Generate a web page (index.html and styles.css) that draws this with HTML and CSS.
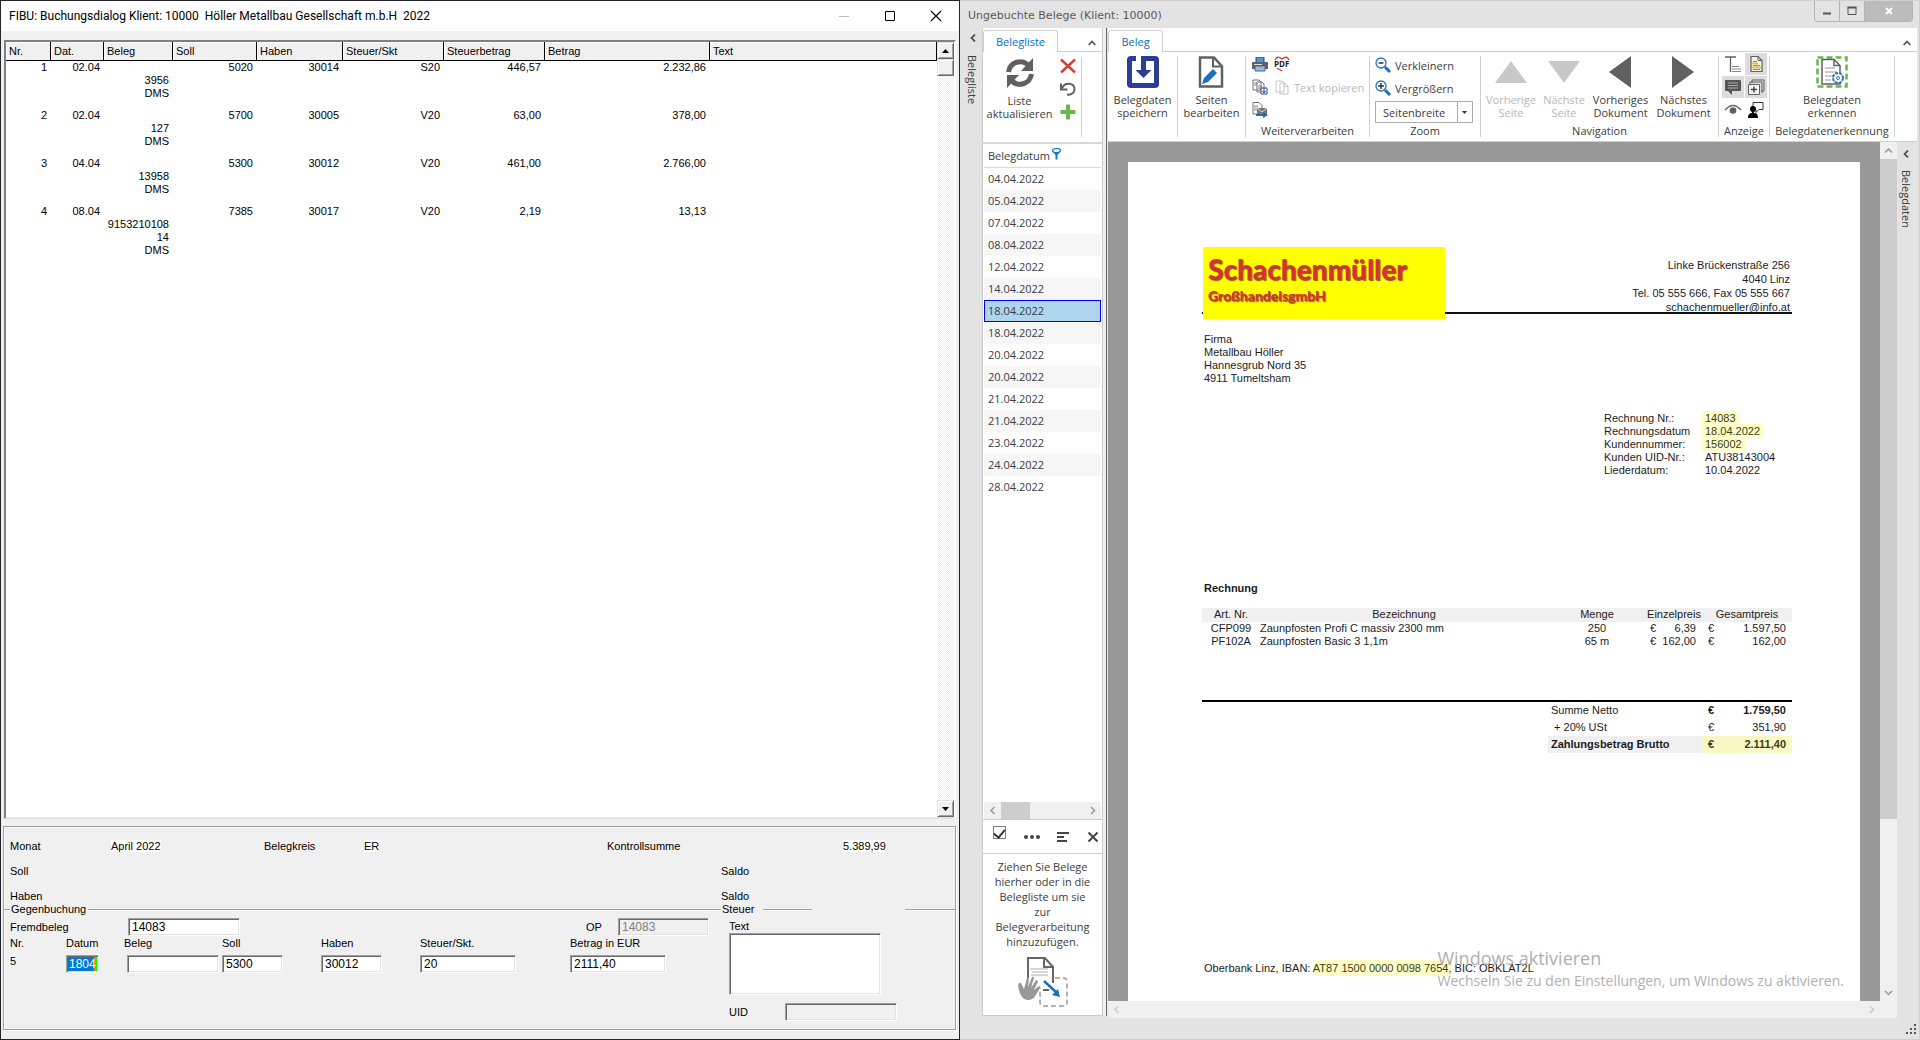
FILE: index.html
```html
<!DOCTYPE html>
<html lang="de">
<head>
<meta charset="utf-8">
<title>FIBU: Buchungsdialog</title>
<link rel="stylesheet" href="styles.css">
</head>
<body>
<div class="desktop">

<section class="fibu">
  <header class="fibu-title">
    <h1>FIBU: Buchungsdialog Klient: 10000&nbsp; Höller Metallbau Gesellschaft m.b.H&nbsp; 2022</h1>
    <button class="caption-btn" aria-label="Minimieren" disabled><svg width="12" height="12"><path d="M1 6.500h10" stroke="#bbb"/></svg></button>
    <button class="caption-btn" aria-label="Maximieren"><svg width="12" height="12"><path d="M1.500 1.500h9v9h-9z" fill="none" stroke="#000"/></svg></button>
    <button class="caption-btn" aria-label="Schließen"><svg width="12" height="12"><path d="M1 1l10 10M11 1L1 11" stroke="#000" stroke-width="1.100"/></svg></button>
  </header>

  <div class="journal">
    <div class="journal-body">
      <table class="bookings">
        <colgroup><col class="c45"><col class="c53"><col class="c69"><col class="c84"><col class="c86"><col class="c101"><col class="c101"><col class="c165"><col></colgroup>
        <thead><tr><th>Nr.</th><th>Dat.</th><th>Beleg</th><th>Soll</th><th>Haben</th><th>Steuer/Skt</th><th>Steuerbetrag</th><th>Betrag</th><th>Text</th></tr></thead>
        <tbody>
          <tr><td>1</td><td>02.04</td><td><br>3956<br>DMS</td><td>5020</td><td>30014</td><td>S20</td><td>446,57</td><td>2.232,86</td><td></td></tr>
          <tr><td>2</td><td>02.04</td><td><br>127<br>DMS</td><td>5700</td><td>30005</td><td>V20</td><td>63,00</td><td>378,00</td><td></td></tr>
          <tr><td>3</td><td>04.04</td><td><br>13958<br>DMS</td><td>5300</td><td>30012</td><td>V20</td><td>461,00</td><td>2.766,00</td><td></td></tr>
          <tr><td>4</td><td>08.04</td><td><br>9153210108<br>14<br>DMS</td><td>7385</td><td>30017</td><td>V20</td><td>2,19</td><td>13,13</td><td></td></tr>
        </tbody>
      </table>
    </div>
    <div class="classic-scroll">
      <button aria-label="Nach oben"><svg width="7" height="4"><path d="M0 4L3.500 0 7 4z"/></svg></button>
      <div class="classic-thumb"></div>
      <button class="down" aria-label="Nach unten"><svg width="7" height="4"><path d="M0 0L3.500 4 7 0z"/></svg></button>
    </div>
  </div>

  <form class="entry">
    <div class="summary">
      <span>Monat</span><span><mark>April 2022</mark></span><span>Belegkreis</span><span><mark>ER</mark></span><span>Kontrollsumme</span><span></span><span><mark>5.389,99</mark></span>
      <span class="wide">Soll</span><span>Saldo</span><span></span>
      <span class="wide">Haben</span><span>Saldo</span><span></span>
    </div>
    <div class="divider">
      <i class="rule"></i><span>Gegenbuchung</span><i class="rule"></i><span>Steuer</span><i class="rule"></i><span></span><i class="rule"></i>
    </div>
    <div class="fields">
      <div class="fields-left">
        <div class="row-a">
          <label for="fremd">Fremdbeleg</label><input id="fremd" class="w112" value="14083">
          <label for="op">OP</label><input id="op" class="w91" value="14083" disabled>
        </div>
        <div class="row-b">
          <span>Nr.</span><label for="datum">Datum</label><label for="beleg">Beleg</label><label for="soll">Soll</label><label for="haben">Haben</label><label for="skt">Steuer/Skt.</label><label for="betrag">Betrag in EUR</label>
          <span>5</span><input id="datum" class="w33 active" value="1804"><input id="beleg" class="w92"><input id="soll" class="w61" value="5300"><input id="haben" class="w61" value="30012"><input id="skt" class="w96" value="20"><input id="betrag" class="w96" value="2111,40">
        </div>
      </div>
      <div class="fields-right">
        <label for="text">Text</label>
        <textarea id="text"></textarea>
        <div class="uid"><label for="uid">UID</label><input id="uid" class="w112" disabled></div>
      </div>
    </div>
  </form>
</section>

<section class="dms">
  <header class="dms-title">
    <h2>Ungebuchte Belege (Klient: 10000)</h2>
    <div class="dms-buttons">
      <button aria-label="Minimieren"><svg width="10" height="10"><path d="M1 7.500h8" stroke="#555" stroke-width="2"/></svg></button>
      <button aria-label="Maximieren"><svg width="10" height="10"><path d="M1 1.500h8v7H1z" fill="none" stroke="#555"/><path d="M.5 1.500h9" stroke="#555" stroke-width="2"/></svg></button>
      <button class="close" aria-label="Schließen"><svg width="10" height="10"><path d="M2 2l6 6M8 2L2 8" stroke="#fff" stroke-width="2"/></svg></button>
    </div>
  </header>

  <div class="dms-body">
    <aside class="side-strip">
      <svg width="8" height="8"><path d="M6 0.500L2.500 4 6 7.500" fill="none" stroke="#555" stroke-width="1.800"/></svg>
      <span>Belegliste</span>
    </aside>

    <div class="list-panel">
      <div class="tabs"><a class="tab" href="#liste">Belegliste</a>
        <svg class="fold" width="8" height="8"><path d="M.7 6L4 2.500 7.300 6" fill="none" stroke="#555" stroke-width="1.800"/></svg></div>
      <div class="list-ribbon">
        <button class="big"><svg width="30" height="32" viewBox="0 0 30 32"><g fill="none" stroke="#606060" stroke-width="5"><path d="M3.500 15C5 5 17 1 24 9"/><path d="M26.500 17C25 27 13 31 6 23"/></g><path d="M28 1v13H16zM2 31V18h12z" fill="#606060"/></svg>Liste<br>aktualisieren</button>
        <div class="small-col">
          <button class="icon" aria-label="Löschen"><svg width="16" height="16"><path d="M1 1.500L15 14.500M15 1.500L1 14.500" stroke="#d6403c" stroke-width="2.500"/></svg></button>
          <button class="icon" aria-label="Rückgängig"><svg width="16" height="16"><path d="M2 7.500C5 0 15 2 14.500 8.500 14 13 10 14 7 13.500" fill="none" stroke="#606060" stroke-width="2"/><path d="M1 2.500V8.500h6.500" fill="none" stroke="#606060" stroke-width="2"/></svg></button>
          <button class="icon" aria-label="Hinzufügen"><svg width="16" height="16"><path d="M8 0.500v15M.5 8h15" stroke="#66b84b" stroke-width="4"/></svg></button>
        </div>
      </div>
      <div class="list-wrap">
        <table class="dates">
          <thead><tr><th>Belegdatum <svg width="9" height="12" viewBox="0 0 9 12"><ellipse cx="4.500" cy="2.500" rx="4" ry="2" fill="#fff" stroke="#0b7ad0" stroke-width="1.200"/><path d="M.5 3.500L3.500 7v4.500h2V7l3-3.500Q4.500 6 .5 3.500" fill="#0b7ad0"/></svg></th></tr></thead>
          <tbody>
            <tr><td>04.04.2022</td></tr><tr><td>05.04.2022</td></tr><tr><td>07.04.2022</td></tr><tr><td>08.04.2022</td></tr><tr><td>12.04.2022</td></tr><tr><td>14.04.2022</td></tr><tr class="selected"><td>18.04.2022</td></tr><tr><td>18.04.2022</td></tr><tr><td>20.04.2022</td></tr><tr><td>20.04.2022</td></tr><tr><td>21.04.2022</td></tr><tr><td>21.04.2022</td></tr><tr><td>23.04.2022</td></tr><tr><td>24.04.2022</td></tr><tr><td>28.04.2022</td></tr>
          </tbody>
        </table>
        <div class="hscroll">
          <button aria-label="Nach links"><svg width="17" height="17"><path d="M10.500 5L7 8.500l3.500 3.500" fill="none" stroke="#999" stroke-width="1.500"/></svg></button>
          <div class="hthumb"></div>
          <button aria-label="Nach rechts"><svg width="17" height="17"><path d="M7 5l3.500 3.500L7 12" fill="none" stroke="#999" stroke-width="1.500"/></svg></button>
        </div>
      </div>
      <div class="list-tools">
        <input type="checkbox" aria-label="Alle auswählen" checked>
        <button class="icon" aria-label="Mehr"><svg width="16" height="12"><g fill="#444"><circle cx="2" cy="6" r="2"/><circle cx="8" cy="6" r="2"/><circle cx="14" cy="6" r="2"/></g></svg></button>
        <button class="icon" aria-label="Sortieren"><svg width="12" height="12"><path d="M0 2h12M0 6h7M0 10h10" stroke="#444" stroke-width="2"/></svg></button>
        <button class="icon" aria-label="Schließen"><svg width="12" height="12"><path d="M1.500 1.500l9 9M10.500 1.500l-9 9" stroke="#444" stroke-width="2"/></svg></button>
      </div>
      <div class="drop">
        <p>Ziehen Sie Belege hierher oder in die Belegliste um sie zur Belegverarbeitung hinzuzufügen.</p>
        <svg width="52" height="52" viewBox="0 0 52 52"><path d="M11 26V2h17l8 9v24H11" fill="#fff"/><path d="M11 22V2h17l8 9v16M26 34h6" fill="none" stroke="#666" stroke-width="2"/><path d="M27 2v9h9" fill="none" stroke="#666" stroke-width="2"/><path d="M13 13h18M15 16h16M14 19h17" stroke="#aaa"/><path d="M38 22h9q3 0 3 4v20q0 4-3 4H26q-3 0-3-4V32" fill="none" stroke="#999" stroke-width="1.500" stroke-dasharray="5 3"/><path d="M2 27q2-1 3 2l2 4 3-11q2-1 2 1l-1 8 4-10q2-1 2 1l-3 10 5-8q2 0 2 2l-4 8 5-4q2 0 1 2l-6 10q-6 4-11 0Q2 38 1 29z" fill="#999"/><path d="M27 25L40 37" stroke="#1b6fbb" stroke-width="2.500"/><path d="M43 41l-8-2 6-6z" fill="#1b6fbb"/></svg>
      </div>
    </div>

    <div class="splitter"></div>

    <div class="main">
      <div class="tabs"><a class="tab narrow" href="#beleg">Beleg</a>
        <svg class="fold" width="8" height="8"><path d="M.7 6L4 2.500 7.300 6" fill="none" stroke="#555" stroke-width="1.800"/></svg></div>
      <div class="ribbon">
        <div class="group g-save">
          <button class="big"><svg width="32" height="32"><path d="M10 2.500H4q-1.500 0-1.500 1.500v24q0 1.500 1.500 1.500h24q1.500 0 1.500-1.500V4q0-1.500-1.500-1.500H16.500V18" fill="none" stroke="#2b3f92" stroke-width="5"/><path d="M8.500 14h16l-8 8z" fill="#2b3f92"/><path d="M9 0h5v5H9z" fill="#fff"/></svg>Belegdaten<br>speichern</button>
        </div>
        <div class="group g-edit">
          <button class="big"><svg width="26" height="32"><path d="M2 1.500h14l8 9v20H2z" fill="#fff" stroke="#606060" stroke-width="2.500"/><path d="M15 1.500v9h9" fill="none" stroke="#606060" stroke-width="2"/><path d="M4 28l2-6L15 13l4 4-9 9z" fill="#1b6fbb"/></svg>Seiten<br>bearbeiten</button>
        </div>
        <div class="group g-process">
          <div class="grid2">
            <button class="icon" aria-label="Drucken"><svg width="16" height="16"><path d="M3.500 1h9v5h-9z" fill="#1b6fbb"/><path d="M5 3h6M5 5h6" stroke="#8cc0e8"/><path d="M0 7q0-1 1-1h14q1 0 1 1v6H0z" fill="#606060"/><path d="M2 8.500h8" stroke="#ddd"/><path d="M3 10h10v5H3z" fill="#8cc0e8" stroke="#606060"/></svg></button>
            <button class="icon pdf" aria-label="PDF"><svg width="16" height="16"><path d="M1 4Q3-1 8 3 13-1 15 4M3 12l5 3" fill="none" stroke="#d33" stroke-width="1.300"/><text x="0" y="11" font-size="8" font-weight="700" fill="#222" font-family="Open Sans, sans-serif">PDF</text></svg></button>
            <button class="icon" aria-label="Kopieren"><svg width="16" height="16"><path d="M1 1h6l2 2v8H1zM5 3h5l2 2v8H5z" fill="#fff" stroke="#707070"/><path d="M6 7h4M6 9h4M2 4h3M2 6h3" stroke="#888"/><path d="M9 9h6v6H9z" fill="#fff" stroke="#2b3f92"/><path d="M12 9v5M10.500 12l1.500 2 1.500-2" fill="none" stroke="#2b3f92"/></svg></button>
            <button class="icon muted" disabled><svg width="16" height="16"><path d="M2 2h6l2 2v9H2zM6 4h5l3 3v8H6z" fill="#fff" stroke="#c4c4c4"/><path d="M10.500 4v3.500H14" fill="none" stroke="#c4c4c4"/></svg>Text kopieren</button>
            <button class="icon" aria-label="Senden"><svg width="16" height="16"><path d="M1 .5h6l3 3V12H1z" fill="#fff" stroke="#707070"/><path d="M2 4h4M2 6h4M2 8h3" stroke="#888"/><path d="M5 6h10v7H5z" fill="#777"/><path d="M5 6l5 4 5-4" fill="none" stroke="#ddd"/><path d="M4 12h7v-2l5 3-5 3v-2H4z" fill="#1b6fbb"/></svg></button>
          </div>
          <span class="caption">Weiterverarbeiten</span>
        </div>
        <div class="group g-zoom">
          <div class="stack">
            <button class="icon"><svg width="16" height="16"><path d="M10 10l5 5" stroke="#1b6fbb" stroke-width="3"/><circle cx="6" cy="6" r="5" fill="#fff" stroke="#2674bb" stroke-width="1.300"/><path d="M3.500 6h5" stroke="#333" stroke-width="1.500"/></svg>Verkleinern</button>
            <button class="icon"><svg width="16" height="16"><path d="M10 10l5 5" stroke="#1b6fbb" stroke-width="3"/><circle cx="6" cy="6" r="5" fill="#fff" stroke="#2674bb" stroke-width="1.300"/><path d="M3 6h6M6 3v6" stroke="#333" stroke-width="1.500"/></svg>Vergrößern</button>
            <div class="combo"><select aria-label="Zoomstufe"><option>Seitenbreite</option></select><svg width="15" height="22"><path d="M.5 0v22" stroke="#ababab"/><path d="M5 9h5l-2.500 3z" fill="#333"/></svg></div>
          </div>
          <span class="caption">Zoom</span>
        </div>
        <div class="group g-nav">
          <div class="nav-row">
            <button class="big" disabled><svg width="32" height="32"><path d="M16 5l16 22H0z" fill="#c8c8c8"/></svg>Vorherige<br>Seite</button>
            <button class="big" disabled><svg width="32" height="32"><path d="M0 5h32L16 27z" fill="#c8c8c8"/></svg>Nächste<br>Seite</button>
            <button class="big"><svg width="32" height="32"><path d="M26 0v32L4 16z" fill="#606060"/></svg>Vorheriges<br>Dokument</button>
            <button class="big"><svg width="32" height="32"><path d="M4 0v32l22-16z" fill="#606060"/></svg>Nächstes<br>Dokument</button>
          </div>
          <span class="caption">Navigation</span>
        </div>
        <div class="group g-view">
          <div class="toggles">
            <button aria-label="Textauswahl"><svg width="18" height="18"><path d="M1 2h11M6.500 2v15" stroke="#606060" stroke-width="1.300"/><path d="M8 11.500h7M8 14h9M8 16.500h9" stroke="#888"/></svg></button>
            <button class="on" aria-label="Markierung"><svg width="18" height="18"><path d="M4 1.500h7l4 4v11H4z" fill="#f4f4f4" stroke="#606060" stroke-width="1.200"/><path d="M11 1.500v4h4" fill="none" stroke="#606060"/><path d="M5 8.500h6M5 12.500h9" stroke="#f0bc3c" stroke-width="2"/><path d="M6 6.500h4M6 14.500h7M6 10.500h7" stroke="#888"/></svg></button>
            <button class="on" aria-label="Kommentare"><svg width="18" height="18"><path d="M2 2h14q1 0 1 1v9q0 1-1 1H8v4l-4-4H2q-1 0-1-1V3q0-1 1-1z" fill="#555"/><path d="M4 5h10M4 7.500h10M4 10h10" stroke="#aaa"/></svg></button>
            <button class="on" aria-label="Ebenen"><svg width="18" height="18"><path d="M5 5V2h12v11h-3M3 7V4h12v11" fill="none" stroke="#606060"/><path d="M1.500 6.500h11v10h-11z" fill="#f4f4f4" stroke="#606060"/><path d="M4 11.500h6M7 8.500v6" stroke="#444" stroke-width="1.500"/></svg></button>
            <button aria-label="Ansicht"><svg width="18" height="18"><path d="M1 9q8-9 16 0" fill="none" stroke="#606060" stroke-width="1.300"/><circle cx="9" cy="9.500" r="3.300" fill="#606060"/></svg></button>
            <button aria-label="Benutzer"><svg width="18" height="18"><path d="M6 1.500h10v7h-4l-3 3V8.500H6z" fill="#fff" stroke="#333"/><circle cx="6" cy="8" r="3" fill="#000"/><path d="M5 10h2v2q4 0 4 5H1q0-5 4-5z" fill="#000"/></svg></button>
          </div>
          <span class="caption">Anzeige</span>
        </div>
        <div class="group g-detect">
          <button class="big"><svg width="32" height="32"><path d="M1.500 1.500h29v29h-29z" fill="none" stroke="#66b84b" stroke-width="2.500" stroke-dasharray="6 3"/><path d="M6 3.500h12l6 6V28H6z" fill="#fff" stroke="#606060" stroke-width="1.500"/><path d="M18 3.500v6h6" fill="none" stroke="#606060" stroke-width="1.500"/><path d="M9 12h10M9 16h12M9 20h8M9 24h6" stroke="#999"/><circle cx="22" cy="22" r="5" fill="#fff" stroke="#2674bb" stroke-width="2" stroke-dasharray="3 1"/><circle cx="22" cy="22" r="1.500" fill="none" stroke="#2674bb"/></svg>Belegdaten<br>erkennen</button>
          <span class="caption">Belegdatenerkennung</span>
        </div>
      </div>

      <div class="work">
        <div class="viewer">
          <div class="canvas">
            <article class="page">
              <header class="letterhead">
                <div class="logo"><strong>Schachenmüller</strong><b>GroßhandelsgmbH</b></div>
                <address>Linke Brückenstraße 256<br>4040 Linz<br>Tel. 05 555 666, Fax 05 555 667<br>schachenmueller@info.at</address>
              </header>
              <p class="recipient">Firma<br>Metallbau Höller<br>Hannesgrub Nord 35<br>4911 Tumeltsham</p>
              <dl class="meta">
                <dt>Rechnung Nr.:</dt><dd><mark>14083</mark></dd>
                <dt>Rechnungsdatum</dt><dd><mark>18.04.2022</mark></dd>
                <dt>Kundennummer:</dt><dd><mark>156002</mark></dd>
                <dt>Kunden UID-Nr.:</dt><dd>ATU38143004</dd>
                <dt>Liederdatum:</dt><dd>10.04.2022</dd>
              </dl>
              <h3>Rechnung</h3>
              <table class="items">
                <colgroup><col class="i-art"><col><col class="i-qty"><col class="i-cur"><col class="i-unit"><col class="i-eur"><col class="i-sum"></colgroup>
                <thead><tr><th>Art. Nr.</th><th>Bezeichnung</th><th>Menge</th><th colspan="2">Einzelpreis</th><th colspan="2">Gesamtpreis</th></tr></thead>
                <tbody>
                  <tr><td class="mid">CFP099</td><td>Zaunpfosten Profi C massiv 2300 mm</td><td class="mid">250</td><td class="cur">€</td><td class="num">6,39</td><td class="eur">€</td><td class="num">1.597,50</td></tr>
                  <tr><td class="mid">PF102A</td><td>Zaunpfosten Basic 3 1,1m</td><td class="mid">65 m</td><td class="cur">€</td><td class="num">162,00</td><td class="eur">€</td><td class="num">162,00</td></tr>
                </tbody>
              </table>
              <div class="totals-wrap">
                <table class="totals">
                  <tr><td>Summe Netto</td><td class="eur"><b>€</b></td><td class="num"><b>1.759,50</b></td></tr>
                  <tr><td>&nbsp;+ 20% USt</td><td class="eur">€</td><td class="num">351,90</td></tr>
                  <tr class="due"><td>Zahlungsbetrag Brutto</td><td class="eur lit">€</td><td class="num lit">2.111,40</td></tr>
                </table>
              </div>
              <p class="bank">Oberbank Linz, IBAN: <mark>AT87 1500 0000 0098 7654,</mark> BIC: OBKLAT2L</p>
            </article>
          </div>
          <div class="vscroll">
            <button aria-label="Nach oben"><svg width="17" height="17"><path d="M5 10.500L8.500 7l3.500 3.500" fill="none" stroke="#999" stroke-width="1.500"/></svg></button>
            <div class="vtrack"><div class="vthumb"></div></div>
            <button aria-label="Nach unten"><svg width="17" height="17"><path d="M5 7l3.500 3.500L12 7" fill="none" stroke="#999" stroke-width="1.500"/></svg></button>
          </div>
          <div class="hscroll wide">
            <button aria-label="Nach links"><svg width="17" height="17"><path d="M10.500 5L7 8.500l3.500 3.500" fill="none" stroke="#ccc" stroke-width="1.500"/></svg></button>
            <span></span>
            <button aria-label="Nach rechts"><svg width="17" height="17"><path d="M7 5l3.500 3.500L7 12" fill="none" stroke="#ccc" stroke-width="1.500"/></svg></button>
          </div>
        </div>
        <aside class="side-strip right">
          <svg width="8" height="8"><path d="M6 0.500L2.500 4 6 7.500" fill="none" stroke="#555" stroke-width="1.800"/></svg>
          <span>Belegdaten</span>
        </aside>
      </div>
    </div>
  </div>
  <footer class="dms-foot"><svg width="11" height="11"><path d="M8 0h2v2H8zM8 4h2v2H8zM4 4h2v2H4zM8 8h2v2H8zM4 8h2v2H4zM0 8h2v2H0z" fill="#555"/></svg></footer>
</section>

<div class="watermark"><p class="wm-title">Windows aktivieren</p><p>Wechseln Sie zu den Einstellungen, um Windows zu aktivieren.</p></div>
</div>
</body>
</html>
```
FILE: styles.css
```css
* { box-sizing: border-box; }
body { margin: 0; font: 11px/13px "Liberation Sans", Arial, sans-serif; color: #000; }
h1, h2, h3, p, dl, dd { margin: 0; font-size: inherit; font-weight: normal; }
button { font: inherit; color: inherit; background: none; border: 0; padding: 0; margin: 0; }
svg { display: block; flex: none; }
mark { color: inherit; }
table { border-collapse: separate; border-spacing: 0; }
th, td { padding: 0; vertical-align: top; }
th { font-weight: normal; }

.desktop { position: relative; display: grid; grid-template-columns: 1fr 1fr; height: 100vh; overflow: hidden; }

/* booking window */
.fibu { display: flex; flex-direction: column; min-width: 0; background: #f0f0f0; border: 1px solid #24242c; }
.fibu-title { display: flex; align-items: center; height: 30px; flex: none; background: #fff; padding-left: 8px; font: 12px/16px Roboto, sans-serif; }
.fibu-title h1 { flex: 1; white-space: nowrap; }
.caption-btn { width: 46px; height: 30px; display: grid; place-items: center; }

.journal { flex: 1; min-height: 0; display: flex; margin: 9px 3px 7px; background: #fff; border: 2px solid; border-color: #808080 #fff #e3e3e3 #808080; }
.journal-body { flex: 1; min-width: 0; overflow: hidden; }
.bookings { width: 100%; table-layout: fixed; }
.c45 { width: 45px; } .c53 { width: 53px; } .c69 { width: 69px; } .c84 { width: 84px; } .c86 { width: 86px; } .c101 { width: 101px; } .c165 { width: 165px; }
.bookings th { height: 19px; padding: 3px 3px 2px; text-align: left; background: #f0f0f0; border-right: 1px solid #000; border-bottom: 1px solid #000; box-shadow: inset 1px 1px #fff; }
.bookings td { text-align: right; padding: 0 4px 9px 0; height: 48px; }
.classic-scroll { width: 17px; display: flex; flex-direction: column; background: repeating-conic-gradient(#fff 0 25%, #f0f0f0 0 50%) 0 0 / 2px 2px; }
.classic-scroll button, .classic-thumb { height: 17px; flex: none; display: grid; place-items: center; background: #f0f0f0; border: 1px solid; border-color: #e3e3e3 #696969 #696969 #e3e3e3; box-shadow: inset 1px 1px #fff, inset -1px -1px #a0a0a0; }
.classic-scroll .down { margin-top: auto; }

.entry { flex: none; height: 204px; margin: 0 3px 9px 2px; border: 1px solid #a0a0a0; box-shadow: inset 1px 1px #fff, 1px 1px #fff; }
.summary { display: grid; grid-template-columns: 101fr 153fr 100fr 243fr 114fr 122fr 112fr; grid-auto-rows: 25px; align-items: center; padding: 7px 0 0 6px; }
.summary mark { background: #fff; }
.summary .wide { grid-column: 1 / 6; }
.divider { display: grid; grid-template-columns: 6fr 78fr 633fr 42fr 49fr 93fr 50fr; align-items: center; margin-top: -6px; white-space: nowrap; }
.divider span { padding-left: 1px; }
.rule { height: 2px; border-top: 1px solid #a0a0a0; border-bottom: 1px solid #fff; }
.fields { display: grid; grid-template-columns: 725fr 226fr; }
.fields-left { padding-left: 6px; }
.row-a { display: grid; grid-template-columns: 118fr 458fr 32fr 111fr; align-items: center; padding-top: 1px; height: 21px; }
.row-b { display: grid; grid-template-columns: 56fr 58fr 95fr 102fr 99fr 150fr 159fr; row-gap: 5px; }
input, textarea { font: 12px/14px "Liberation Sans", Arial, sans-serif; color: #000; background: #fff; height: 18px; margin: 0; padding: 0 3px; border: 1px solid; border-color: #a0a0a0 #fff #fff #a0a0a0; border-radius: 0; box-shadow: inset 1px 1px #696969, inset -1px -1px #e3e3e3; }
input:disabled { background: #f0f0f0; color: #808080; }
.w33 { width: 33px; } .w61 { width: 61px; } .w91 { width: 91px; } .w92 { width: 92px; } .w96 { width: 96px; } .w112 { width: 112px; }
#beleg { justify-self: end; }
.row-b label[for="soll"], #soll { margin-left: 3px; }
.active { color: #fff; padding: 0 2px; background: linear-gradient(90deg, #0f0 1px, #0078d7 1px 27px, #f80 27px 28px, #0f0 28px); }
.fields-right { padding-top: 4px; }
.fields-right label { display: block; }
textarea { display: block; width: 152px; height: 62px; resize: none; }
.uid { display: flex; align-items: center; padding-top: 8px; }
.uid label { width: 56px; }

/* document window */
.dms { display: flex; flex-direction: column; min-width: 0; background: #e3e3e3; border: solid #d0d0d0; border-width: 1px 1px 1px 0; font: 11px/13px "Open Sans", sans-serif; color: #3c3c3c; }
.dms-title { display: flex; justify-content: space-between; height: 27px; flex: none; padding: 0 6px 0 8px; }
.dms-title h2 { font: 11px/30px "DejaVu Sans", sans-serif; color: #5a5a5a; }
.dms-buttons { display: flex; height: 21px; border: 1px solid #b4b4b4; border-top: 0; border-radius: 0 0 4px 4px; overflow: hidden; }
.dms-buttons button { width: 25px; display: grid; place-items: center; border-right: 1px solid #b4b4b4; }
.dms-buttons .close { width: 47px; background: #bcbcbc; border: 0; }
.dms-body { flex: 1; min-height: 0; display: grid; grid-template-columns: 22px 121px 5px minmax(0, 1fr); padding-right: 2px; }
.side-strip { display: flex; flex-direction: column; align-items: center; gap: 13px; padding: 6px 0 0 3px; font-size: 11px; }
.side-strip span { writing-mode: vertical-rl; }
.side-strip.right { width: 20px; padding: 8px 2px 0 0; gap: 12px; }
.dms-foot { flex: none; height: 21px; display: flex; justify-content: flex-end; padding: 6px 2px 0; }

.tabs { flex: none; height: 24px; display: flex; align-items: flex-end; justify-content: space-between; background: #fff; box-shadow: inset 0 -1px #d0d0d0; }
.tab { width: 75px; height: 22px; border: 1px solid #d0d0d0; border-bottom: 0; border-radius: 3px 3px 0 0; background: #fff; color: #0072c6; text-align: center; text-decoration: none; line-height: 22px; }
.tab.narrow { width: 55px; }
.fold { margin: 0 6px 5px; }
.big { display: flex; flex-direction: column; align-items: center; justify-content: flex-start; gap: 5px; text-align: center; white-space: nowrap; }
.big:disabled, .muted { color: #b8b8b8; }
.icon { display: flex; align-items: center; gap: 4px; white-space: nowrap; }

.list-panel { display: flex; flex-direction: column; min-height: 0; background: #fff; border: 1px solid #ccc; border-top: 0; margin-bottom: 2px; }
.list-ribbon { flex: none; height: 92px; display: flex; padding: 5px 0; border-bottom: 2px solid #d8d8d8; }
.list-ribbon .big { width: 73px; }
.small-col { width: 26px; padding: 1px 0 0 4px; display: flex; flex-direction: column; gap: 7px; border-right: 1px solid #d0d0d0; }
.list-wrap { flex: 1; min-height: 0; display: flex; flex-direction: column; justify-content: space-between; padding: 0 1px; border-bottom: 1px solid #ccc; }
.dates { width: 100%; }
.dates th { height: 23px; line-height: 14px; text-align: left; padding: 4px; border-bottom: 1px solid #d8d8d8; }
.dates th svg { display: inline; margin-left: -1px; }
.dates td { height: 22px; padding: 4px 4px 5px; }
.dates tr:nth-child(even) td { background: #f6f6f6; }
.dates tbody .selected { outline: 1px solid #00f; outline-offset: -1px; background: #aed4ee; }
.hscroll { height: 17px; flex: none; display: flex; background: #f0f0f0; }
.hthumb { width: 29px; background: #cdcdcd; margin-right: auto; }
.list-tools { flex: none; height: 34px; display: flex; align-items: center; justify-content: space-between; padding: 0 3px 0 10px; border-bottom: 1px solid #ccc; }
.list-tools input { appearance: none; display: grid; justify-items: center; width: 13px; height: 13px; padding: 0; margin-bottom: 8px; border: 1px solid #808080; box-shadow: none; }
.list-tools input::before { content: ""; width: 5px; height: 9px; border: solid #333; border-width: 0 2px 2px 0; transform: rotate(40deg); }
.drop { flex: none; height: 161px; display: flex; flex-direction: column; align-items: center; gap: 7px; padding: 5px 8px 0; text-align: center; line-height: 15px; }
.splitter { margin-bottom: 2px; background: linear-gradient(90deg, #f0f0f0 3px, #666 3px 4px, #e3e3e3 4px); }

.main { display: flex; flex-direction: column; min-height: 0; min-width: 0; }
.ribbon { flex: none; height: 90px; display: flex; padding: 4px 0; background: #fff; border-bottom: 1px solid #d0d0d0; }
.group { flex: none; display: flex; flex-direction: column; align-items: center; justify-content: space-between; border-right: 1px solid #d0d0d0; }
.caption { line-height: 12px; white-space: nowrap; }
.g-save { width: 70px; } .g-edit { width: 68px; } .g-process { width: 124px; } .g-zoom { width: 111px; } .g-nav { width: 238px; } .g-view { width: 51px; } .g-detect { width: 125px; }
.grid2 { align-self: stretch; display: grid; grid-template-columns: 18px 1fr; gap: 7px 4px; padding: 0 0 0 6px; }
.stack { align-self: stretch; padding: 1px 7px 0 5px; display: flex; flex-direction: column; gap: 7px; }
.stack .combo { margin-top: -2px; }
.combo { display: flex; height: 22px; border: 1px solid #ababab; overflow: hidden; }
.combo select { flex: 1; min-width: 0; appearance: none; border: 0; background: #fff; color: inherit; font: inherit; padding: 0 7px; }
.nav-row { align-self: stretch; display: grid; grid-template-columns: 56px 50px 63px 63px; padding-left: 2px; }
.toggles { display: grid; grid-template-columns: 22px 22px; grid-auto-rows: 22px; gap: 1px; margin-top: -3px; }
.toggles button { display: grid; place-items: center; }
.toggles .on { background: #dcdcdc; }

.work { flex: 1; min-height: 0; display: flex; }
.viewer { flex: 1; min-width: 0; display: grid; grid-template-columns: minmax(0, 1fr) 17px; grid-template-rows: minmax(0, 1fr) 17px; }
.canvas { background: #999; padding: 20px 20px 0; overflow: hidden; }
.vscroll { display: flex; flex-direction: column; background: #f0f0f0; }
.vtrack { flex: 1; }
.vthumb { height: 80%; background: #cdcdcd; }
.hscroll.wide { grid-column: 1 / 3; justify-content: space-between; padding-right: 17px; }
.hscroll.wide span { flex: 1; }

/* invoice */
.page { min-height: 100%; background: #fff; padding: 85px 68px 24px 74px; font: 11px/13px "Liberation Sans", Arial, sans-serif; color: #1c1c1c; }
.page mark { background: #ffffc8; color: #3c3c10; padding: 1px 4px; margin-left: -4px; }
.letterhead { display: flex; justify-content: space-between; height: 67px; border-bottom: 2px solid #111; }
.logo { width: 242px; height: 72px; margin-left: 1px; padding: 4px 5px; display: flex; flex-direction: column; background: #ff0; color: #d3322e; font-family: Lato, sans-serif; text-shadow: 1px 1px 1px #8a5a20; }
.logo strong { font-size: 28px; line-height: 36px; font-weight: 900; }
.logo b { font-size: 14px; line-height: 18px; font-weight: 900; }
.page address { font-style: normal; text-align: right; line-height: 14px; padding: 11px 2px 0 0; }
.recipient { padding-left: 2px; margin-top: 19px; }
.meta { display: grid; grid-template-columns: 101px 1fr; width: 188px; margin: 27px 0 105px auto; }
.page h3 { font-weight: bold; padding-left: 2px; margin-bottom: 13px; }
.items { width: 100%; table-layout: fixed; }
.i-art { width: 58px; } .i-qty { width: 98px; } .i-cur { width: 14px; } .i-unit { width: 42px; } .i-eur { width: 18px; } .i-sum { width: 72px; }
.items th { height: 14px; background: #f0f0f0; }
.mid { text-align: center; }
.num { text-align: right; padding-right: 6px; }
.cur { padding-left: 4px; }
.eur { padding-left: 6px; }
.totals-wrap { margin-top: 52px; border-top: 2px solid #000; }
.totals { width: 244px; margin-left: auto; }
.totals td { height: 17px; vertical-align: middle; }
.totals td:first-child { padding-left: 3px; }
.totals .eur { width: 18px; }
.totals .num { width: 72px; }
.due { font-weight: bold; background: #f0f0f0; }
.due .lit { background: #f8f8c4; color: #3c3c10; }
.bank { padding-left: 2px; margin-top: 209px; white-space: nowrap; }
.page .bank mark { padding: 2px 0; margin: 0; }

.watermark { position: absolute; right: 76px; bottom: 49px; color: #b0b0b0; font: 14px/20px "Open Sans", sans-serif; white-space: nowrap; pointer-events: none; }
.wm-title { font-size: 18px; line-height: 26px; }
```
